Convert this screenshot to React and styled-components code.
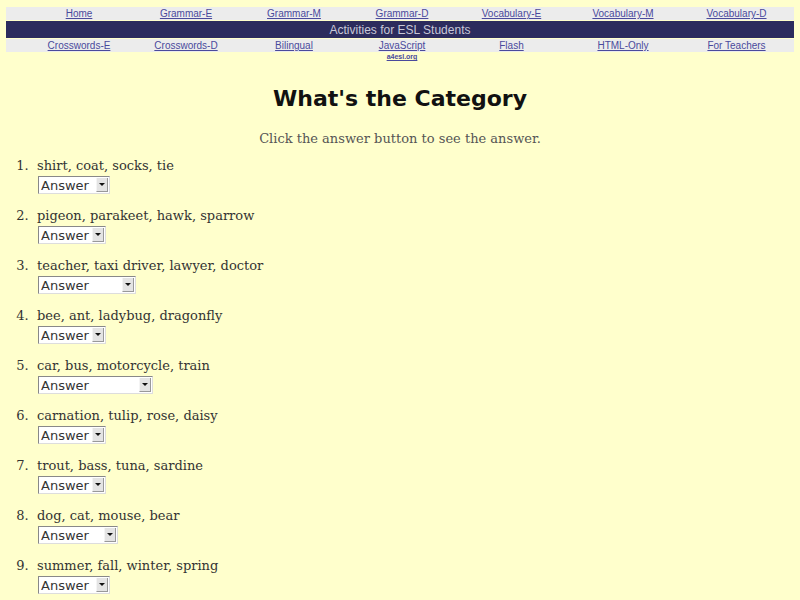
import React from "react";
import styled, { createGlobalStyle } from "styled-components";

const GlobalStyle = createGlobalStyle`
  html, body {
    margin: 0;
    padding: 0;
    background: #ffffcc;
  }
`;

const Page = styled.div`
  padding: 7px 6px 0 6px;
  font-family: "DejaVu Serif", serif;
  color: #333;
`;

const Nav = styled.div`
  display: flex;
  flex-direction: column;
  gap: 1px;
`;

const LinkRow = styled.div`
  display: grid;
  grid-template-columns: 126px 108px 108px 108px 111px 112px 115px;
  background: #ececec;
  height: 13px;
  align-items: center;
`;

const Cell = styled.div`
  display: flex;
  flex-direction: column;
  align-items: center;
  min-width: 0;
  position: relative;
  &:first-child {
    padding-left: 20px;
  }
`;

const NavLink = styled.a`
  font-family: "Liberation Sans", Arial, sans-serif;
  font-size: 10px;
  color: #4a4a9c;
  text-decoration: underline;
  white-space: nowrap;
`;

const SubLink = styled.a`
  position: absolute;
  top: 13px;
  font-family: "Liberation Sans", Arial, sans-serif;
  font-size: 7px;
  font-weight: bold;
  color: #4a4a9c;
  text-decoration: underline;
  white-space: nowrap;
`;

const Banner = styled.div`
  background: #2c2c5d;
  height: 17px;
  display: flex;
  align-items: center;
  justify-content: center;
  font-family: "Liberation Sans", Arial, sans-serif;
  font-size: 12px;
  color: #c8c8d8;
`;

const Title = styled.h1`
  margin: 32px 0 0 0;
  text-align: center;
  font-family: "Comic Sans MS", "DejaVu Sans", sans-serif;
  font-size: 22px;
  font-weight: bold;
  color: #111;
  line-height: 30px;
`;

const Intro = styled.p`
  margin: 16px 0 0 0;
  text-align: center;
  font-size: 13px;
  color: #555;
  line-height: 17px;
`;

const List = styled.ol`
  margin: 10px 0 0 0;
  padding-left: 31px;
  font-size: 13px;
  line-height: 17px;
  color: #333;
`;

const Item = styled.li`
  height: 50px;
  &::marker {
    color: #333;
    content: counter(list-item) ".\\00a0\\00a0";
  }
`;

const SelectBox = styled.div`
  position: relative;
  margin: 2px 0 0 1px;
  width: ${(p) => p.$w}px;
  height: 18px;
  box-sizing: border-box;
  background: #fff;
  border: 1px solid #aaa;
  border-top-color: #888;
  border-left-color: #888;
  border-bottom-color: #ddd;
  border-right-color: #ddd;
`;

const Select = styled.select`
  appearance: none;
  border: none;
  background: transparent;
  width: 100%;
  height: 100%;
  padding: 0 0 0 2px;
  margin: 0;
  font-family: "DejaVu Sans", sans-serif;
  font-size: 13px;
  color: #333;
  outline: none;
`;

const Arrow = styled.span`
  position: absolute;
  right: 1px;
  top: 1px;
  width: 12px;
  height: 14px;
  background: #e4e4e4;
  border-left: 1px solid #f4f4f4;
  border-bottom: 1px solid #999;
  border-right: 1px solid #999;
  box-sizing: border-box;
  display: flex;
  align-items: center;
  justify-content: center;
  pointer-events: none;
  &::after {
    content: "";
    border-left: 3px solid transparent;
    border-right: 3px solid transparent;
    border-top: 3px solid #111;
  }
`;

const row1 = ["Home", "Grammar-E", "Grammar-M", "Grammar-D", "Vocabulary-E", "Vocabulary-M", "Vocabulary-D"];
const row2 = ["Crosswords-E", "Crosswords-D", "Bilingual", "JavaScript", "Flash", "HTML-Only", "For Teachers"];

const questions = [
  { q: "shirt, coat, socks, tie", a: "clothes", w: 72 },
  { q: "pigeon, parakeet, hawk, sparrow", a: "birds", w: 68 },
  { q: "teacher, taxi driver, lawyer, doctor", a: "occupations", w: 98 },
  { q: "bee, ant, ladybug, dragonfly", a: "insects", w: 68 },
  { q: "car, bus, motorcycle, train", a: "transportation", w: 115 },
  { q: "carnation, tulip, rose, daisy", a: "flowers", w: 68 },
  { q: "trout, bass, tuna, sardine", a: "fish", w: 68 },
  { q: "dog, cat, mouse, bear", a: "animals", w: 80 },
  { q: "summer, fall, winter, spring", a: "seasons", w: 72 },
];

export default function App() {
  return (
    <Page>
      <GlobalStyle />
      <Nav>
        <LinkRow>
          {row1.map((t) => (
            <Cell key={t}>
              <NavLink href="#">{t}</NavLink>
            </Cell>
          ))}
        </LinkRow>
        <Banner>Activities for ESL Students</Banner>
        <LinkRow>
          {row2.map((t) => (
            <Cell key={t}>
              <NavLink href="#">{t}</NavLink>
              {t === "JavaScript" && <SubLink href="#">a4esl.org</SubLink>}
            </Cell>
          ))}
        </LinkRow>
      </Nav>
      <Title>What's the Category</Title>
      <Intro>Click the answer button to see the answer.</Intro>
      <List>
        {questions.map((item) => (
          <Item key={item.q}>
            {item.q}
            <SelectBox $w={item.w}>
              <Select defaultValue="Answer">
                <option>Answer</option>
                <option>{item.a}</option>
              </Select>
              <Arrow />
            </SelectBox>
          </Item>
        ))}
      </List>
    </Page>
  );
}
